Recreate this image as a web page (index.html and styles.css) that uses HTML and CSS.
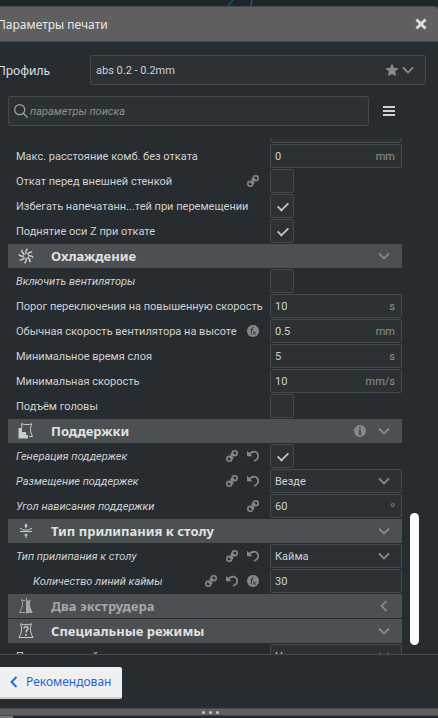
FILE: index.html
```html
<!DOCTYPE html>
<html lang="ru">
<head>
<meta charset="utf-8">
<title>Параметры печати</title>
<link rel="stylesheet" href="styles.css">
</head>
<body>
<svg class="defs" aria-hidden="true">
  <symbol id="down" viewBox="0 0 12 12"><path d="M1 3.5l5 5 5-5" fill="none" stroke="currentColor" stroke-width="1.8"/></symbol>
  <symbol id="left" viewBox="0 0 12 12"><path d="M8.5 1l-5 5 5 5" fill="none" stroke="currentColor" stroke-width="1.8"/></symbol>
  <symbol id="link" viewBox="0 0 12 12"><g fill="none" stroke="currentColor" stroke-width="1.6"><circle cx="3.3" cy="8.7" r="2.500"/><circle cx="8.7" cy="3.3" r="2.500"/><path d="M3.600 8.400l4.800-4.800M5.800 8.200l1.600-.6M4.600 4.800l1.600-1" /></g></symbol>
  <symbol id="undo" viewBox="0 0 12 12"><path d="M2.200 4.100C5 1.200 8.500 1 10.200 3.200c2 2.500 1.200 6.600-3.200 7.800" fill="none" stroke="currentColor" stroke-width="1.800"/><path d="M0 .8v5.400h5.400z" fill="currentColor"/></symbol>
  <symbol id="fx" viewBox="0 0 12 12"><circle cx="6" cy="6" r="6" fill="currentColor"/><path d="M6.800 2.300C5.500 1.800 5.100 3 4.800 4.500L4 9.300M3.200 4.700h3.200M6.200 6.500l2.600 3.300M8.800 6.500L6 9.800" fill="none" stroke="#30363a" stroke-width="1"/></symbol>
  <symbol id="info" viewBox="0 0 12 12"><circle cx="6" cy="6" r="6" fill="currentColor"/><path d="M5 2h2v1.500H5zM4.500 4.500H7V9h.8v1H4.500V9H5V5.500h-.5z" fill="#4b5053"/></symbol>
</svg>

<div class="viewport">
  <svg class="model-lines" viewBox="0 0 30 6" aria-hidden="true"><path d="M0 6l5-6M23 6l1-6" fill="none" stroke="#177294"/></svg>
</div>
<main class="panel">
  <header class="titlebar">
    <h1>Параметры печати</h1>
    <button class="close" aria-label="Закрыть"><svg viewBox="0 0 12 12"><path d="M1.500 1.500l9 9M10.500 1.500l-9 9" stroke="currentColor" stroke-width="3"/></svg></button>
  </header>

  <div class="profile">
    <span class="profile-label" id="profile-label">Профиль</span>
    <button class="profile-box" aria-labelledby="profile-label profile-value">
      <span id="profile-value">abs 0.2 - 0.2mm</span>
      <svg class="star" viewBox="0 0 14 14"><path d="M7 .5l2 4.300 4.700.5-3.500 3.200 1 4.800L7 10.900l-4.200 2.400 1-4.800L.3 5.300 5 4.800z" fill="currentColor"/></svg>
      <svg class="icon"><use href="#down"/></svg>
    </button>
  </div>

  <div class="search">
    <label class="search-box">
      <svg viewBox="0 0 14 14"><g fill="none" stroke="currentColor" stroke-width="1.300"><circle cx="5.700" cy="5.700" r="5"/><path d="M9.300 9.300l4.300 4.300"/></g></svg>
      <input type="search" placeholder="параметры поиска" aria-label="параметры поиска">
    </label>
    <button class="menu" aria-label="Меню"><svg viewBox="0 0 12 10"><path d="M0 1h12M0 5h12M0 9h12" stroke="currentColor" stroke-width="2"/></svg></button>
  </div>

  <div class="scroll">
    <div class="list">
      <div class="row"><span class="name"></span><span class="field"></span></div>
      <div class="row"><label class="name" for="comb">Макс. расстояние комб. без отката</label><span class="field"><input id="comb" value="0"><span>mm</span></span></div>
      <div class="row"><label class="name" for="outer">Откат перед внешней стенкой</label><svg class="icon"><use href="#link"/></svg><span class="control"><input type="checkbox" id="outer"></span></div>
      <div class="row"><label class="name" for="avoid">Избегать напечатанн...тей при перемещении</label><span class="control"><input type="checkbox" id="avoid" checked></span></div>
      <div class="row"><label class="name" for="zhop">Поднятие оси Z при откате</label><span class="control"><input type="checkbox" id="zhop" checked></span></div>

      <button class="section">
        <svg class="section-icon" viewBox="0 0 16 16"><g fill="none" stroke="currentColor" stroke-width="1.500"><path id="blade" d="M8 6C7.500 4 8 2 9.500.7"/><use href="#blade" transform="rotate(45 8 8)"/><use href="#blade" transform="rotate(90 8 8)"/><use href="#blade" transform="rotate(135 8 8)"/><use href="#blade" transform="rotate(180 8 8)"/><use href="#blade" transform="rotate(225 8 8)"/><use href="#blade" transform="rotate(270 8 8)"/><use href="#blade" transform="rotate(315 8 8)"/></g></svg>
        <span>Охлаждение</span><svg class="icon"><use href="#down"/></svg>
      </button>
      <div class="row changed"><label class="name" for="fans">Включить вентиляторы</label><span class="control"><input type="checkbox" id="fans"></span></div>
      <div class="row"><label class="name" for="threshold">Порог переключения на повышенную скорость</label><span class="field"><input id="threshold" value="10"><span>s</span></span></div>
      <div class="row"><label class="name" for="height">Обычная скорость вентилятора на высоте</label><svg class="icon"><use href="#fx"/></svg><span class="field"><input id="height" value="0.5"><span>mm</span></span></div>
      <div class="row"><label class="name" for="layer">Минимальное время слоя</label><span class="field"><input id="layer" value="5"><span>s</span></span></div>
      <div class="row"><label class="name" for="speed">Минимальная скорость</label><span class="field"><input id="speed" value="10"><span>mm/s</span></span></div>
      <div class="row"><label class="name" for="lift">Подъём головы</label><span class="control"><input type="checkbox" id="lift"></span></div>

      <button class="section">
        <svg class="section-icon" viewBox="0 0 16 16"><path d="M4 5L3.500.7l3 .8h5l2.500-.8c-2 4-2 8 .5 12.800H11" fill="none" stroke="currentColor"/><path d="M.5 5H4v4h4v3h2v3.500H.5z" fill="currentColor"/></svg>
        <span>Поддержки</span><svg class="icon"><use href="#info"/></svg><svg class="icon"><use href="#down"/></svg>
      </button>
      <div class="row changed"><label class="name" for="support">Генерация поддержек</label><svg class="icon"><use href="#link"/></svg><svg class="icon"><use href="#undo"/></svg><span class="control"><input type="checkbox" id="support" checked></span></div>
      <div class="row changed"><label class="name" for="placement">Размещение поддержек</label><svg class="icon"><use href="#link"/></svg><svg class="icon"><use href="#undo"/></svg><span class="field"><select id="placement"><option>Везде</option></select><svg class="icon"><use href="#down"/></svg></span></div>
      <div class="row changed"><label class="name" for="angle">Угол нависания поддержки</label><svg class="icon"><use href="#link"/></svg><span class="field"><input id="angle" value="60"><span class="degree">°</span></span></div>

      <button class="section">
        <svg class="section-icon" viewBox="0 0 16 16"><g fill="none" stroke="currentColor"><path d="M2 5.500c2 0 2.500 1.500 4 1.500h4c1.500 0 2-1.500 4-1.500M2 8.500h12M8 .5v4M8 11v4"/></g><path d="M6.300 2.700L8 1l1.700 1.700L8 5zM6 12.500h4L8 10.300z" fill="currentColor"/></svg>
        <span>Тип прилипания к столу</span><svg class="icon"><use href="#down"/></svg>
      </button>
      <div class="row changed"><label class="name" for="adhesion">Тип прилипания к столу</label><svg class="icon"><use href="#link"/></svg><svg class="icon"><use href="#undo"/></svg><span class="field"><select id="adhesion"><option>Кайма</option></select><svg class="icon"><use href="#down"/></svg></span></div>
      <div class="row changed nested"><label class="name" for="brim">Количество линий каймы</label><svg class="icon"><use href="#link"/></svg><svg class="icon"><use href="#undo"/></svg><svg class="icon"><use href="#fx"/></svg><span class="field"><input id="brim" value="30"></span></div>

      <button class="section muted">
        <svg class="section-icon" viewBox="0 0 16 16"><path d="M7 2.500H5L3.500 1.500C5.500 6 4.500 9 1.500 14.500H7M8.500 0v16" fill="none" stroke="currentColor"/><path d="M8.500 2.500H11l2-1c-2 4.500-1 8 2 13.500H8.500z" fill="currentColor"/></svg>
        <span>Два экструдера</span><svg class="icon"><use href="#left"/></svg>
      </button>
      <button class="section">
        <svg class="section-icon" viewBox="0 0 16 16"><path d="M2.500.7l2 1h7l2-1c-2 5-1.200 9 1.500 13.800H1C3.700 9.700 4.500 5.700 2.500.7z" fill="none" stroke="currentColor"/><path d="M6 5.500C6 3 10.300 3 10 5.700 9.800 7 8 7 8 9.500M8 11v2" fill="none" stroke="currentColor" stroke-width="1.500"/></svg>
        <span>Специальные режимы</span><svg class="icon"><use href="#down"/></svg>
      </button>
      <div class="row"><label class="name" for="surface">Поверхностный режим</label><span class="field"><select id="surface"><option>Нормаль</option></select><svg class="icon"><use href="#down"/></svg></span></div>
    </div>
    <div class="scrollbar"><div class="thumb"></div></div>
  </div>

  <footer class="footer">
    <button class="recommended"><svg class="icon"><use href="#left"/></svg>Рекомендован</button>
  </footer>
  <div class="grip"><i></i><i></i><i></i></div>
</main>
<div class="below"></div>
</body>
</html>
```
FILE: styles.css
```css
* { box-sizing: border-box; }

body {
  margin: 0;
  height: 100vh;
  display: flex;
  flex-direction: column;
  overflow: hidden;
  background: #1f2427;
  color: #d0d1d1;
  font: 11px/16px Roboto, "Noto Sans", sans-serif;
}

button, input, select {
  margin: 0;
  padding: 0;
  border: 0;
  border-radius: 0;
  background: none;
  color: inherit;
  font: inherit;
  appearance: none;
  outline: 0;
}

svg { display: block; flex: none; }
.defs { position: absolute; width: 0; height: 0; }
.icon { width: 12px; height: 12px; color: #868989; }

.viewport { height: 6px; flex: none; }
.model-lines { width: 30px; height: 6px; margin-left: 228px; }

.panel {
  flex: 1;
  min-height: 0;
  display: flex;
  flex-direction: column;
  background: #272c30;
  border-top: 1px solid #44494d;
  border-top-right-radius: 3px;
}

.titlebar {
  height: 35px;
  flex: none;
  display: flex;
  align-items: center;
  justify-content: space-between;
  padding-right: 11px;
  border-bottom: 1px solid #44494d;
  border-top-right-radius: 3px;
  background: #5f5f5f;
}
.titlebar h1 { margin: 0 0 0 -3px; padding-top: 2px; font-family: "Noto Sans", sans-serif; font-size: 12px; font-weight: 400; color: #e8e8e8; }
.close svg { width: 12px; height: 12px; color: #dcdcdc; }

.profile {
  display: flex;
  align-items: center;
  margin: 13px 12px 0 -3px;
}
.profile-label { width: 93px; padding-top: 2px; font-family: "Noto Sans", sans-serif; font-size: 12px; color: #e0e0e0; }
.profile-box, .search-box {
  flex: 1;
  min-width: 0;
  height: 30px;
  display: flex;
  align-items: center;
  border: 1px solid #44494d;
  border-radius: 2px;
  background: #2c3134;
}
.profile-box { padding: 0 11px 0 5px; text-align: left; }
.profile-box span { flex: 1; padding-top: 2px; }
.star { width: 14px; height: 14px; margin-right: 3px; color: #868989; }

.search { display: flex; align-items: center; margin: 11px 43px 12px 8px; }
.search-box { margin-right: 14px; padding-left: 5px; gap: 2px; }
.search-box svg { width: 14px; height: 14px; color: #a0a2a3; }
.search-box input { flex: 1; min-width: 0; padding-top: 2px; font-style: italic; }
.search-box input::placeholder { color: #8f9293; opacity: 1; }
.menu svg { width: 12px; height: 10px; color: #d0d1d1; }

.scroll { flex: 1; min-height: 0; display: flex; overflow: hidden; padding-left: 8px; }
.list {
  flex: 1;
  min-width: 0;
  display: flex;
  flex-direction: column;
  gap: 1px;
  margin-top: -19px;
}
.row { height: 24px; flex: none; display: flex; align-items: center; gap: 9px; padding-left: 8px; }
.nested { padding-left: 25px; }
.name { flex: 1; min-width: 0; padding-top: 2px; white-space: nowrap; }
.changed .name { font-style: italic; }
.control, .field { width: 132px; height: 24px; flex: none; margin-left: 2px; }
.field {
  display: flex;
  align-items: center;
  padding: 0 6px 0 4px;
  border: 1px solid #44494d;
  border-radius: 2px;
  background: #2c3134;
}
.field input, .field select { flex: 1; min-width: 0; padding-top: 2px; }
.field span { padding-top: 2px; color: #8f9293; }
.field .degree { font-family: "Noto Sans", sans-serif; }
.field .icon { margin-right: 5px; }
.control input {
  display: block;
  width: 24px;
  height: 24px;
  border: 1px solid #44494d;
  border-radius: 2px;
  background: #2c3134;
}
.control input:checked::before {
  content: "";
  display: block;
  width: 10px;
  height: 5px;
  margin: 7px 0 0 6px;
  border: solid #c4c6c6;
  border-width: 0 0 2px 2px;
  transform: rotate(-45deg) scale(0.9);
}

.section {
  height: 24px;
  flex: none;
  display: flex;
  align-items: center;
  padding: 0 12px 0 10px;
  gap: 12px;
  background: #4b5053;
  color: #e0e1e1;
  font-family: "Noto Sans", sans-serif;
  text-align: left;
}
.section span { flex: 1; margin-left: 5px; font-size: 13px; font-weight: 700; }
.section-icon { width: 16px; height: 16px; color: #cbcccc; }
.muted, .muted .section-icon { color: #a5a7a8; }

.scrollbar { width: 9px; flex: none; display: flex; flex-direction: column; justify-content: flex-end; margin: 0 19px 9px 8px; }
.thumb { height: 26%; border-radius: 5px; background: #fff; }

.footer { flex: none; padding: 12px 0 9px; border-top: 1px solid #44494d; }
.recommended {
  width: 122px;
  height: 32px;
  display: flex;
  align-items: center;
  gap: 6px;
  padding-left: 8px;
  border-bottom: 2px solid #d0d0d0;
  border-radius: 0 2px 2px 0;
  background: #f0f0f0;
  color: #1964d8;
  font-family: "Noto Sans", sans-serif;
  font-size: 12px;
}
.recommended .icon { color: inherit; }

.grip {
  height: 8px;
  flex: none;
  display: flex;
  align-items: center;
  justify-content: center;
  gap: 4px;
  padding-right: 17px;
  border: solid #44494d;
  border-width: 1px 0;
  background: #5f5f5f;
}
.grip i { width: 3px; height: 3px; border-radius: 2px; background: #c8c8c8; }
.below { height: 2px; flex: none; background: linear-gradient(90deg, #777 13px, #1f2a30 13px); }
```
